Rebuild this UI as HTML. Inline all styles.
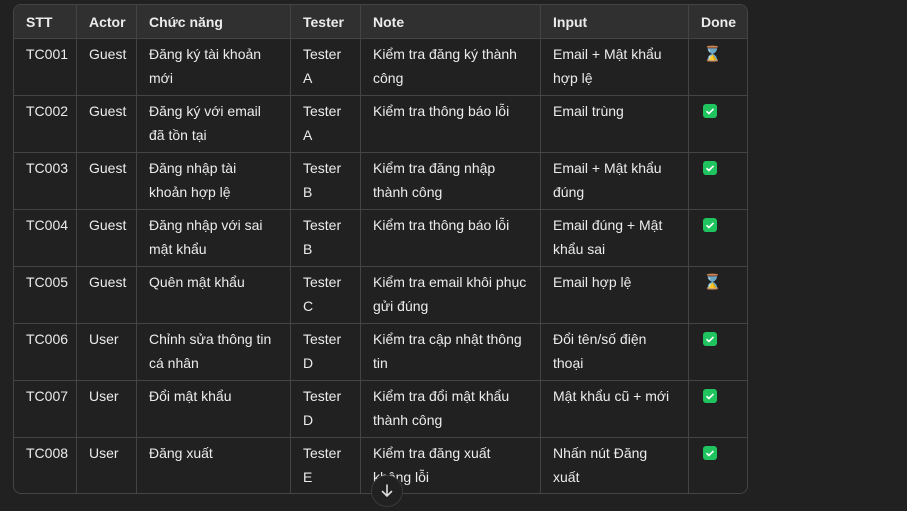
<!DOCTYPE html>
<html><head><meta charset="utf-8"><style>
html,body{margin:0;padding:0;background:#212121;width:907px;height:508px;overflow:hidden;font-family:"Liberation Sans","DejaVu Sans",sans-serif;}
.wrap{position:absolute;left:13px;top:4px;width:735px;height:490px;border:1px solid #444;border-radius:8px;overflow:hidden;box-sizing:border-box;}
table{border-collapse:collapse;width:735px;table-layout:fixed;color:#ececec;font-size:14px;position:absolute;left:-1px;top:-1px;}
th,td{border:1px solid #444;padding:0 12px;text-align:left;vertical-align:top;}
th{background:#303030;height:33px;font-weight:bold;vertical-align:middle;}
td{height:57px;box-sizing:border-box;padding-top:3px;line-height:24px;}
td:last-child{padding-left:14px}
.ic{display:inline-block;width:14px;height:14px;border-radius:3px;background:#1fc45f;position:relative;top:2px;}
.ic svg{position:absolute;left:0;top:0}
.hg{font-size:15px;color:#f3b94a}
.btn{position:absolute;left:371px;top:475px;width:32px;height:32px;border-radius:50%;background:#212121;border:1px solid #3a3a3a;box-sizing:border-box;}
</style></head><body>
<div class="wrap"><table>
<colgroup><col style="width:63px"><col style="width:60px"><col style="width:154px"><col style="width:70px"><col style="width:180px"><col style="width:148px"><col style="width:60px"></colgroup>
<tr><th>STT</th><th>Actor</th><th>Chức năng</th><th>Tester</th><th>Note</th><th>Input</th><th>Done</th></tr>
<tr><td>TC001</td><td>Guest</td><td>Đăng ký tài khoản mới</td><td>Tester A</td><td>Kiểm tra đăng ký thành công</td><td>Email + Mật khẩu hợp lệ</td><td><span class="hg">⌛</span></td></tr>
<tr><td>TC002</td><td>Guest</td><td>Đăng ký với email đã tồn tại</td><td>Tester A</td><td>Kiểm tra thông báo lỗi</td><td>Email trùng</td><td><span class="ic"><svg width="14" height="14"><path d="M3.5 7.2l2.4 2.3 4.6-4.6" stroke="#fff" stroke-width="1.6" fill="none"/></svg></span></td></tr>
<tr><td>TC003</td><td>Guest</td><td>Đăng nhập tài khoản hợp lệ</td><td>Tester B</td><td>Kiểm tra đăng nhập thành công</td><td>Email + Mật khẩu đúng</td><td><span class="ic"><svg width="14" height="14"><path d="M3.5 7.2l2.4 2.3 4.6-4.6" stroke="#fff" stroke-width="1.6" fill="none"/></svg></span></td></tr>
<tr><td>TC004</td><td>Guest</td><td>Đăng nhập với sai mật khẩu</td><td>Tester B</td><td>Kiểm tra thông báo lỗi</td><td>Email đúng + Mật khẩu sai</td><td><span class="ic"><svg width="14" height="14"><path d="M3.5 7.2l2.4 2.3 4.6-4.6" stroke="#fff" stroke-width="1.6" fill="none"/></svg></span></td></tr>
<tr><td>TC005</td><td>Guest</td><td>Quên mật khẩu</td><td>Tester C</td><td>Kiểm tra email khôi phục gửi đúng</td><td>Email hợp lệ</td><td><span class="hg">⌛</span></td></tr>
<tr><td>TC006</td><td>User</td><td>Chỉnh sửa thông tin cá nhân</td><td>Tester D</td><td>Kiểm tra cập nhật thông tin</td><td>Đổi tên/số điện thoại</td><td><span class="ic"><svg width="14" height="14"><path d="M3.5 7.2l2.4 2.3 4.6-4.6" stroke="#fff" stroke-width="1.6" fill="none"/></svg></span></td></tr>
<tr><td>TC007</td><td>User</td><td>Đổi mật khẩu</td><td>Tester D</td><td>Kiểm tra đổi mật khẩu thành công</td><td>Mật khẩu cũ + mới</td><td><span class="ic"><svg width="14" height="14"><path d="M3.5 7.2l2.4 2.3 4.6-4.6" stroke="#fff" stroke-width="1.6" fill="none"/></svg></span></td></tr>
<tr><td>TC008</td><td>User</td><td>Đăng xuất</td><td>Tester E</td><td>Kiểm tra đăng xuất không lỗi</td><td>Nhấn nút Đăng xuất</td><td><span class="ic"><svg width="14" height="14"><path d="M3.5 7.2l2.4 2.3 4.6-4.6" stroke="#fff" stroke-width="1.6" fill="none"/></svg></span></td></tr>
</table></div>
<div class="btn"><svg width="30" height="30" viewBox="0 0 30 30"><path d="M15 9v11M10.5 15.5L15 20l4.5-4.5" stroke="#ddd" stroke-width="1.6" fill="none" stroke-linecap="round"/></svg></div>
</body></html>
